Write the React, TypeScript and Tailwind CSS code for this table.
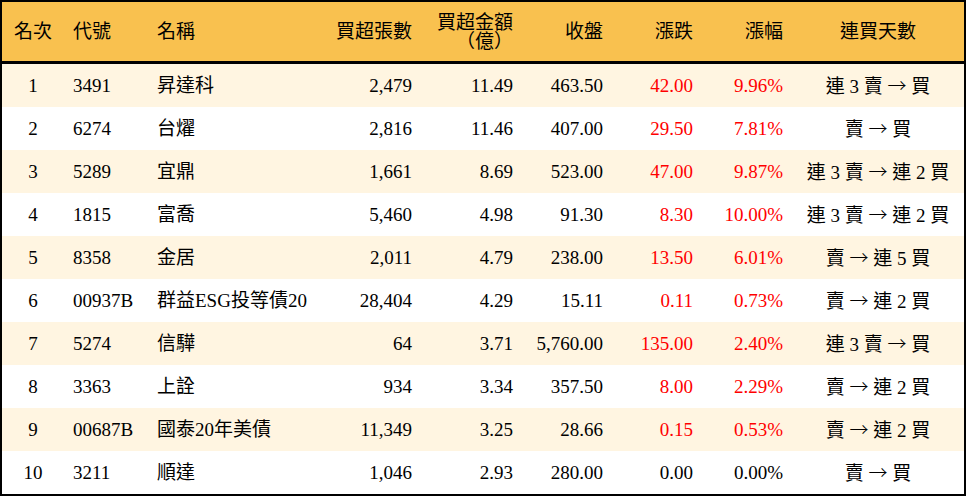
import React from "react";

type Row = {
  rank: string;
  code: string;
  name: string;
  vol: string;
  amt: string;
  close: string;
  chg: string;
  pct: string;
  days: string;
  red: boolean;
};

const rows: Row[] = [
  { rank: "1", code: "3491", name: "昇達科", vol: "2,479", amt: "11.49", close: "463.50", chg: "42.00", pct: "9.96%", days: "連 3 賣 → 買", red: true },
  { rank: "2", code: "6274", name: "台燿", vol: "2,816", amt: "11.46", close: "407.00", chg: "29.50", pct: "7.81%", days: "賣 → 買", red: true },
  { rank: "3", code: "5289", name: "宜鼎", vol: "1,661", amt: "8.69", close: "523.00", chg: "47.00", pct: "9.87%", days: "連 3 賣 → 連 2 買", red: true },
  { rank: "4", code: "1815", name: "富喬", vol: "5,460", amt: "4.98", close: "91.30", chg: "8.30", pct: "10.00%", days: "連 3 賣 → 連 2 買", red: true },
  { rank: "5", code: "8358", name: "金居", vol: "2,011", amt: "4.79", close: "238.00", chg: "13.50", pct: "6.01%", days: "賣 → 連 5 買", red: true },
  { rank: "6", code: "00937B", name: "群益ESG投等債20", vol: "28,404", amt: "4.29", close: "15.11", chg: "0.11", pct: "0.73%", days: "賣 → 連 2 買", red: true },
  { rank: "7", code: "5274", name: "信驊", vol: "64", amt: "3.71", close: "5,760.00", chg: "135.00", pct: "2.40%", days: "連 3 賣 → 買", red: true },
  { rank: "8", code: "3363", name: "上詮", vol: "934", amt: "3.34", close: "357.50", chg: "8.00", pct: "2.29%", days: "賣 → 連 2 買", red: true },
  { rank: "9", code: "00687B", name: "國泰20年美債", vol: "11,349", amt: "3.25", close: "28.66", chg: "0.15", pct: "0.53%", days: "賣 → 連 2 買", red: true },
  { rank: "10", code: "3211", name: "順達", vol: "1,046", amt: "2.93", close: "280.00", chg: "0.00", pct: "0.00%", days: "賣 → 買", red: false },
];

const grid =
  "grid grid-cols-[62px_84px_182px_91px_101px_90px_90px_90px_172px]";

function Days({ text }: { text: string }) {
  const parts = text.split("→");
  return (
    <>
      {parts[0]}
      <span
        className="font-light"
        style={{ fontFamily: '"Noto Sans CJK TC", "DejaVu Sans", sans-serif' }}
      >
        →
      </span>
      {parts[1]}
    </>
  );
}

export default function App() {
  return (
    <div
      className="w-[966px] h-[496px] bg-white border-2 border-black text-black text-[19px] leading-[20px] overflow-hidden"
      style={{ fontFamily: '"Liberation Serif", "Noto Sans CJK TC", serif' }}
    >
      <div className={`${grid} h-[62px] bg-[#F9C14F] border-b-[3px] border-black items-center`}>
        <div className="text-center">名次</div>
        <div className="pl-[9px]">代號</div>
        <div className="pl-[9px]">名稱</div>
        <div className="text-right pr-[9px]">買超張數</div>
        <div className="text-right pr-[9px] leading-[19px]">
          買超金額
          <br />
          （億）
        </div>
        <div className="text-right pr-[9px]">收盤</div>
        <div className="text-right pr-[9px]">漲跌</div>
        <div className="text-right pr-[9px]">漲幅</div>
        <div className="text-center">連買天數</div>
      </div>
      {rows.map((r, i) => (
        <div
          key={r.rank}
          className={`${grid} h-[43px] items-center ${i % 2 === 0 ? "bg-[#FFF5E1]" : "bg-white"}`}
        >
          <div className="text-center">{r.rank}</div>
          <div className="pl-[9px]">{r.code}</div>
          <div className="pl-[9px] whitespace-nowrap">{r.name}</div>
          <div className="text-right pr-[9px]">{r.vol}</div>
          <div className="text-right pr-[9px]">{r.amt}</div>
          <div className="text-right pr-[9px] whitespace-nowrap">{r.close}</div>
          <div className={`text-right pr-[9px] ${r.red ? "text-[#FF0000]" : ""}`}>{r.chg}</div>
          <div className={`text-right pr-[9px] ${r.red ? "text-[#FF0000]" : ""}`}>{r.pct}</div>
          <div className="text-center whitespace-nowrap">
            <Days text={r.days} />
          </div>
        </div>
      ))}
    </div>
  );
}
